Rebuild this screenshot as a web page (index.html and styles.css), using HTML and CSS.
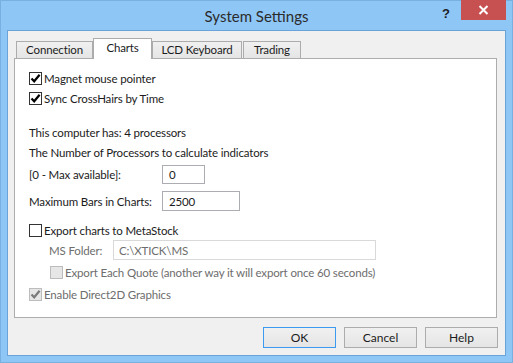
FILE: index.html
```html
<!DOCTYPE html>
<html lang="en">
  <head>
    <meta charset="UTF-8" />
    <title>System Settings</title>
    <link rel="stylesheet" href="styles.css">
  </head>
  <body>
    <div class="window">
      <div class="titlebar">
        <span></span>
        <span class="title">System Settings</span>
        <div class="controls">
          <span class="help">?</span>
          <span class="close">
            <svg width="11" height="10" viewBox="0 0 11 10">
              <path d="M1.5 1 L9.5 9 M9.5 1 L1.5 9" stroke="#fff" stroke-width="2" fill="none" />
            </svg>
          </span>
        </div>
      </div>

      <div class="client">
        <div class="tabs">
          <div class="tab t-conn">Connection</div>
          <div class="tab t-charts active">Charts</div>
          <div class="tab t-lcd">LCD Keyboard</div>
          <div class="tab t-trading">Trading</div>
        </div>

        <div class="panel">
          <div class="row check-row r-magnet">
            <span class="box"><svg width="11" height="11" viewBox="0 0 11 11"><path d="M1.5 5.5 L4.2 8.3 L9.6 1.8" stroke="#000" stroke-width="2.2" fill="none" /></svg></span>
            <span>Magnet mouse pointer</span>
          </div>
          <div class="row check-row r-sync">
            <span class="box"><svg width="11" height="11" viewBox="0 0 11 11"><path d="M1.5 5.5 L4.2 8.3 L9.6 1.8" stroke="#000" stroke-width="2.2" fill="none" /></svg></span>
            <span>Sync CrossHairs by Time</span>
          </div>

          <div class="row text-row r-has">This computer has: 4 processors</div>
          <div class="row text-row r-num">The Number of Processors to calculate indicators</div>

          <div class="row field-row r-max">
            <span class="label">[0 - Max available]:</span>
            <span class="input in-procs">0</span>
          </div>
          <div class="row field-row r-bars">
            <span class="label">Maximum Bars in Charts:</span>
            <span class="input in-bars">2500</span>
          </div>

          <div class="row check-row r-export">
            <span class="box"></span>
            <span>Export charts to MetaStock</span>
          </div>
          <div class="row field-row r-folder disabled">
            <span class="label folder-label">MS Folder:</span>
            <span class="input in-folder">C:\XTICK\MS</span>
          </div>
          <div class="row check-row r-quote disabled">
            <span class="box"></span>
            <span>Export Each Quote (another way it will export once 60 seconds)</span>
          </div>
          <div class="row check-row r-d2d disabled">
            <span class="box"><svg width="11" height="11" viewBox="0 0 11 11"><path d="M1.5 5.5 L4.2 8.3 L9.6 1.8" stroke="#7a7a7a" stroke-width="2.2" fill="none" /></svg></span>
            <span>Enable Direct2D Graphics</span>
          </div>
        </div>

        <div class="buttons">
          <button class="btn default">OK</button>
          <button class="btn">Cancel</button>
          <button class="btn">Help</button>
        </div>
      </div>
    </div>
  </body>
</html>
```

FILE: styles.css
```css
* {
  box-sizing: border-box;
}

body {
  margin: 0;
  font-family: Lato, "Noto Sans", sans-serif;
  font-size: 11.5px;
  letter-spacing: -0.15px;
  color: #1b1b1b;
  white-space: nowrap;
}

.window {
  width: 513px;
  height: 363px;
  background: #8ec6f6;
  border: 1px solid #78b0e2;
  display: flex;
  flex-direction: column;
}

/* title bar */
.titlebar {
  height: 29px;
  display: grid;
  grid-template-columns: 1fr auto 1fr;
  align-items: start;
}

.title {
  font-size: 15px;
  letter-spacing: 0;
  color: #2b2b2b;
  line-height: 29px;
  padding-top: 1px;
}

.controls {
  display: flex;
  justify-content: flex-end;
  padding-right: 6px;
}

.help {
  width: 26px;
  height: 20px;
  text-align: center;
  font-family: "Liberation Sans", sans-serif;
  font-weight: bold;
  font-size: 13px;
  line-height: 26px;
  color: #1e1e1e;
  margin-right: 2px;
}

.close {
  width: 45px;
  height: 20px;
  margin-top: -1px;
  background: #c75050;
  display: flex;
  align-items: center;
  justify-content: center;
}

/* client area */
.client {
  flex: 1;
  margin: 0 6px 6px 6px;
  background: #f0f0f0;
  border: 1px solid #6aa3da;
  padding-top: 7px;
  display: flex;
  flex-direction: column;
}

.tabs {
  display: flex;
  align-items: flex-end;
  height: 20px;
  padding-left: 8px;
  position: relative;
  z-index: 1;
}

.tab {
  height: 17px;
  border: 1px solid #acacac;
  border-bottom: none;
  background: linear-gradient(#f0f0f0, #e5e5e5);
  text-align: center;
  line-height: 16px;
}

.tab.active {
  height: 21px;
  margin-bottom: -1px;
  background: #fff;
  line-height: 18px;
}

.t-conn { width: 77px; }
.t-charts { width: 59px; }
.t-lcd { width: 90px; }
.t-trading { width: 58px; margin-left: 1px; }

.panel {
  height: 260px;
  margin: 0 8px 0 6px;
  background: #fff;
  border: 1px solid #adadad;
  padding: 13px 14px 0 14px;
}

.row {
  display: flex;
  align-items: center;
}

.check-row {
  height: 13px;
  gap: 2px;
}

.box {
  width: 13px;
  height: 13px;
  border: 1px solid #333;
  background: #fff;
  display: flex;
  align-items: center;
  justify-content: center;
}

.text-row {
  height: 16px;
}

.field-row .label {
  width: 133px;
}

.input {
  border: 1px solid #abadb3;
  background: #fff;
  padding-left: 6px;
  display: flex;
  align-items: center;
}

.in-procs { width: 43px; height: 19px; }
.in-bars { width: 78px; height: 20px; }

.r-sync { margin-top: 7px; }
.r-has { margin-top: 19px; }
.r-num { margin-top: 4px; }
.r-max { margin-top: 5px; height: 19px; }
.r-bars { margin-top: 7px; height: 20px; }
.r-export { margin-top: 13px; }
.r-folder { margin-top: 3px; height: 20px; padding-left: 20px; }
.r-quote { margin-top: 6px; padding-left: 21px; }
.r-d2d { margin-top: 9px; }

.disabled {
  color: #6d6d6d;
}

.disabled .box {
  border-color: #bcbcbc;
  background: #e6e6e6;
}

.folder-label.label {
  width: 64px;
}

.in-folder {
  width: 263px;
  height: 20px;
  border-color: #d9d9d9;
  color: #6d6d6d;
  padding-left: 5px;
}

/* bottom buttons */
.buttons {
  display: flex;
  justify-content: flex-end;
  gap: 8px;
  padding: 9px 7px 0 0;
}

.btn {
  width: 73px;
  height: 21px;
  font-family: inherit;
  font-size: 12px;
  letter-spacing: 0;
  color: #1b1b1b;
  border: 1px solid #acacac;
  background: linear-gradient(#f0f0f0, #e5e5e5);
  padding: 0;
}

.btn.default {
  border-color: #3c9bf0;
}
```
